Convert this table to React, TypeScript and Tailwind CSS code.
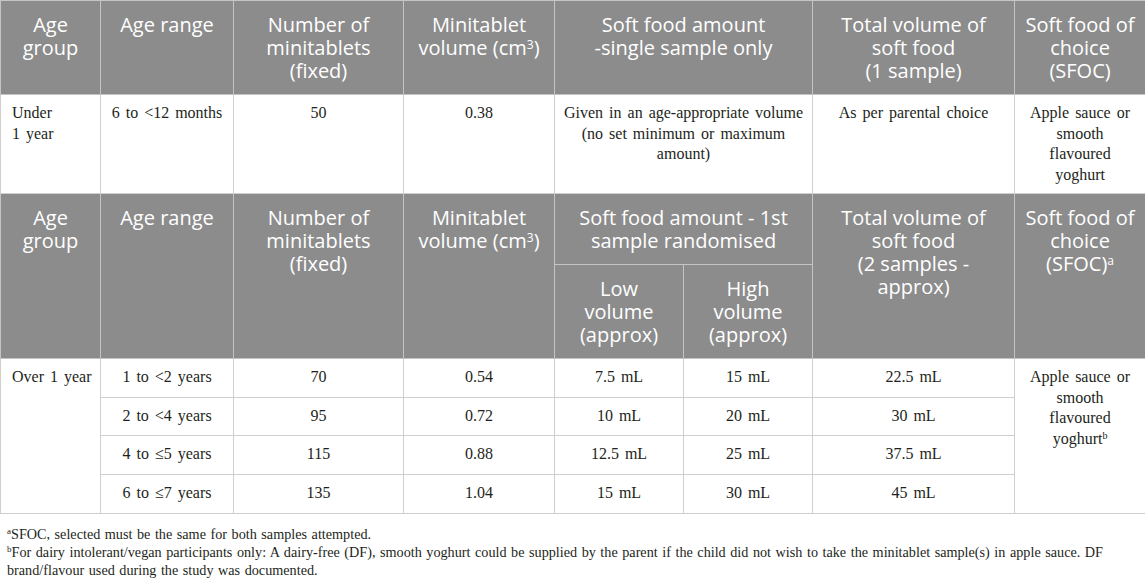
import React from 'react';

const th =
  'bg-[#8c8c8c] text-white font-["Open_Sans",sans-serif] text-[20px] leading-[23px] font-normal text-center align-top border border-[#c4c4c4] px-2 pt-3 pb-3';
const td =
  'font-["Liberation_Serif",serif] text-[16px] leading-[20.7px] text-[#231f20] text-center align-top border border-[#cfcfcf] px-2 pt-[8px] pb-[9px] [word-spacing:2px]';
const tdTop =
  'font-["Liberation_Serif",serif] text-[16px] leading-[20.7px] text-[#231f20] text-center align-top border border-[#cfcfcf] px-2 pt-[8px] pb-[7px] [word-spacing:2px]';

const rows = [
  { range: '1 to <2 years', n: '70', vol: '0.54', low: '7.5 mL', high: '15 mL', total: '22.5 mL' },
  { range: '2 to <4 years', n: '95', vol: '0.72', low: '10 mL', high: '20 mL', total: '30 mL' },
  { range: '4 to ≤5 years', n: '115', vol: '0.88', low: '12.5 mL', high: '25 mL', total: '37.5 mL' },
  { range: '6 to ≤7 years', n: '135', vol: '1.04', low: '15 mL', high: '30 mL', total: '45 mL' },
];

export default function App() {
  return (
    <div className="w-[1145px] h-[584px] bg-white overflow-hidden">
      <table className="w-[1145px] table-fixed border-collapse">
        <colgroup>
          <col className="w-[100px]" />
          <col className="w-[133px]" />
          <col className="w-[170px]" />
          <col className="w-[151px]" />
          <col className="w-[129px]" />
          <col className="w-[129px]" />
          <col className="w-[202px]" />
          <col className="w-[131px]" />
        </colgroup>
        <tbody>
          {/* Under 1 year */}
          <tr>
            <th className={th}>Age<br />group</th>
            <th className={th}>Age range</th>
            <th className={th}>Number of<br />minitablets<br />(fixed)</th>
            <th className={th}>Minitablet<br />volume (cm<sup className="text-[12px]">3</sup>)</th>
            <th className={th} colSpan={2}>Soft food amount<br />-single sample only</th>
            <th className={th}>Total volume of<br />soft food<br />(1 sample)</th>
            <th className={th}>Soft food of<br />choice<br />(SFOC)</th>
          </tr>
          <tr>
            <td className={`${tdTop} !text-left pl-[11px]`}>Under<br />1 year</td>
            <td className={tdTop}>6 to &lt;12 months</td>
            <td className={tdTop}>50</td>
            <td className={tdTop}>0.38</td>
            <td className={tdTop} colSpan={2}>
              Given in an age-appropriate volume<br />(no set minimum or maximum<br />amount)
            </td>
            <td className={tdTop}>As per parental choice</td>
            <td className={tdTop}>Apple sauce or<br />smooth<br />flavoured<br />yoghurt</td>
          </tr>

          {/* Over 1 year */}
          <tr>
            <th className={th} rowSpan={2}>Age<br />group</th>
            <th className={th} rowSpan={2}>Age range</th>
            <th className={th} rowSpan={2}>Number of<br />minitablets<br />(fixed)</th>
            <th className={th} rowSpan={2}>Minitablet<br />volume (cm<sup className="text-[12px]">3</sup>)</th>
            <th className={th} colSpan={2}>Soft food amount - 1st<br />sample randomised</th>
            <th className={th} rowSpan={2}>Total volume of<br />soft food<br />(2 samples -<br />approx)</th>
            <th className={th} rowSpan={2}>Soft food of<br />choice<br />(SFOC)<sup className="text-[12px]">a</sup></th>
          </tr>
          <tr>
            <th className={th}>Low<br />volume<br />(approx)</th>
            <th className={th}>High<br />volume<br />(approx)</th>
          </tr>
          {rows.map((r, i) => (
            <tr key={r.range}>
              {i === 0 && (
                <td className={`${td} !text-left pl-[11px]`} rowSpan={4}>Over 1 year</td>
              )}
              <td className={td}>{r.range}</td>
              <td className={td}>{r.n}</td>
              <td className={td}>{r.vol}</td>
              <td className={td}>{r.low}</td>
              <td className={td}>{r.high}</td>
              <td className={td}>{r.total}</td>
              {i === 0 && (
                <td className={td} rowSpan={4}>
                  Apple sauce or<br />smooth<br />flavoured<br />yoghurt<sup className="text-[10px]">b</sup>
                </td>
              )}
            </tr>
          ))}
        </tbody>
      </table>

      <div className="mt-[11px] pl-[7px] pr-[10px] font-['Liberation_Serif',serif] text-[14.2px] leading-[18px] text-[#231f20] [word-spacing:1px]">
        <p>
          <sup className="text-[9px]">a</sup>SFOC, selected must be the same for both samples attempted.
        </p>
        <p>
          <sup className="text-[9px]">b</sup>For dairy intolerant/vegan participants only: A dairy-free (DF), smooth yoghurt could be supplied by the parent if the child did not wish to take the minitablet sample(s) in apple sauce. DF brand/flavour used during the study was documented.
        </p>
      </div>
    </div>
  );
}
